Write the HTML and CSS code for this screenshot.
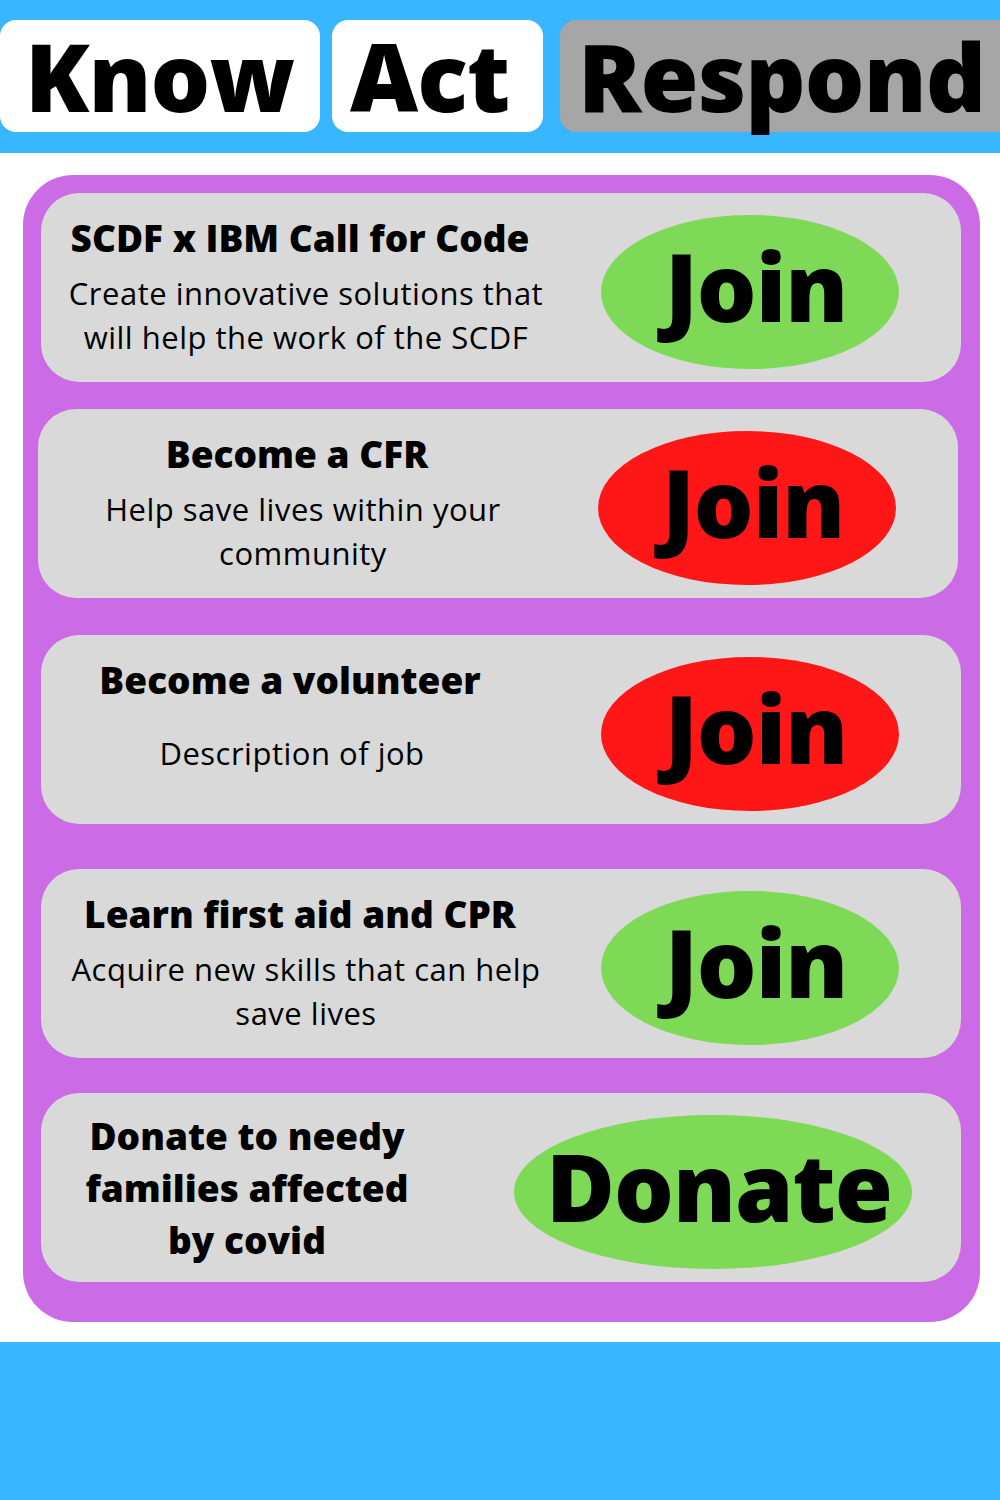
FILE: index.html
```html
<!DOCTYPE html>
<html lang="en">
<head>
<meta charset="utf-8">
<title>Know Act Respond</title>
<link rel="stylesheet" href="styles.css">
</head>
<body>
<header class="topbar">
  <div class="tab tab-know">Know</div>
  <div class="tab tab-act">Act</div>
  <div class="tab tab-respond">Respond</div>
</header>
<main class="main">
  <section class="panel">
    <div class="card card-1">
      <div class="text">
        <div class="title">SCDF x IBM Call for Code</div>
        <div class="desc">Create innovative solutions that<br>will help the work of the SCDF</div>
      </div>
      <div class="oval green">Join</div>
    </div>
    <div class="card card-2">
      <div class="text">
        <div class="title">Become a CFR</div>
        <div class="desc">Help save lives within your<br>community</div>
      </div>
      <div class="oval red">Join</div>
    </div>
    <div class="card card-3">
      <div class="text">
        <div class="title title-shift">Become a volunteer</div>
        <div class="desc desc-far">Description of job</div>
      </div>
      <div class="oval red">Join</div>
    </div>
    <div class="card card-4">
      <div class="text">
        <div class="title">Learn first aid and CPR</div>
        <div class="desc">Acquire new skills that can help<br>save lives</div>
      </div>
      <div class="oval green">Join</div>
    </div>
    <div class="card card-5">
      <div class="text text-narrow">
        <div class="title title-multi">Donate to needy<br>families affected<br>by covid</div>
      </div>
      <div class="oval oval-wide green">Donate</div>
    </div>
  </section>
</main>
<footer class="footer"></footer>
</body>
</html>
```
FILE: styles.css
```css
* { box-sizing: border-box; }
html, body { margin: 0; padding: 0; }
body {
  background: #ffffff;
  font-family: "Open Sans", "Liberation Sans", sans-serif;
  color: #000;
  width: 1000px;
}
.topbar {
  background: #38b6ff;
  height: 153px;
  padding-top: 20px;
  display: flex;
  overflow: hidden;
}
.tab {
  flex-shrink: 0;
  height: 112px;
  border-radius: 16px;
  background: #ffffff;
  font-size: 94px;
  font-weight: 800;
  line-height: 112px;
  letter-spacing: -1px;
  white-space: nowrap;
}
.tab-know { width: 320px; padding-left: 25px; }
.tab-act { width: 211px; margin-left: 12px; padding-left: 18px; }
.tab-respond { width: 440px; margin-left: 17px; padding-left: 18px; background: #a6a6a6; border-radius: 16px 0 0 16px; }

.main {
  padding: 22px 20px 20px 23px;
}
.panel {
  background: #cb6ce6;
  border-radius: 50px;
  padding: 18px 19px 40px 18px;
  display: flex;
  flex-direction: column;
}
.card {
  background: #d9d9d9;
  border-radius: 38px;
  height: 189px;
  display: flex;
  align-items: flex-start;
}
.card-2 { margin-top: 27px; margin-left: -3px; margin-right: 3px; }
.card-3 { margin-top: 37px; }
.card-4 { margin-top: 45px; }
.card-5 { margin-top: 35px; }

.text {
  width: 518px;
  padding-top: 23px;
  text-align: center;
}
.text-narrow { width: 412px; padding-top: 17px; }
.title {
  font-size: 37px;
  font-weight: 800;
  line-height: 44px;
  white-space: nowrap;
}
.title-shift { margin-right: 20px; }
.title-multi { line-height: 52px; }
.desc {
  margin-top: 11px;
  padding-left: 12px;
  font-size: 31px;
  font-weight: 400;
  letter-spacing: 0.5px;
  line-height: 44px;
  white-space: nowrap;
}
.desc-far { margin-top: 29px; padding-left: 0; padding-right: 16px; }

.oval {
  margin-top: 22px;
  margin-left: 42px;
  width: 298px;
  height: 154px;
  border-radius: 50%;
  padding-left: 12px;
  text-align: center;
  font-size: 94px;
  font-weight: 800;
  line-height: 143px;
  letter-spacing: -1px;
  flex-shrink: 0;
}
.oval-wide { width: 398px; margin-left: 61px; }
.green { background: #7ed957; }
.red { background: #ff1616; }

.footer {
  background: #38b6ff;
  height: 158px;
}
```
